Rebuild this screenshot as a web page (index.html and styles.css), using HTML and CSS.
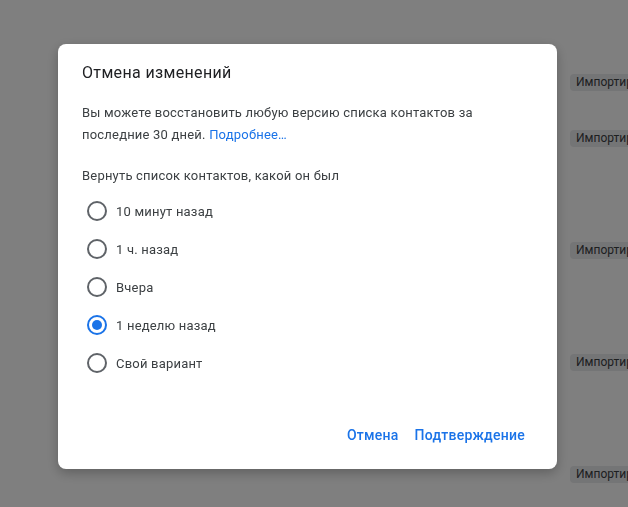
FILE: index.html
```html
<!DOCTYPE html>
<html lang="ru">
<head>
  <meta charset="UTF-8">
  <title>Отмена изменений</title>
  <link rel="stylesheet" href="styles.css">
</head>
<body>

  <!-- page behind the dialog -->
  <div class="page">
    <div class="row"><span class="chip">Импортированные</span></div>
    <div class="row"><span class="chip">Импортированные</span></div>
    <div class="row"></div>
    <div class="row"><span class="chip">Импортированные</span></div>
    <div class="row"></div>
    <div class="row"><span class="chip">Импортированные</span></div>
    <div class="row"></div>
    <div class="row"><span class="chip">Импортированные</span></div>
  </div>

  <div class="scrim"></div>

  <div class="dialog">
    <h2 class="dialog-title">Отмена изменений</h2>
    <p class="dialog-text">Вы можете восстановить любую версию списка контактов за последние 30 дней. <a href="#">Подробнее…</a></p>

    <p class="dialog-label">Вернуть список контактов, какой он был</p>
    <div class="options">
      <label class="option"><span class="radio"></span>10 минут назад</label>
      <label class="option"><span class="radio"></span>1 ч. назад</label>
      <label class="option"><span class="radio"></span>Вчера</label>
      <label class="option"><span class="radio checked"></span>1 неделю назад</label>
      <label class="option"><span class="radio"></span>Свой вариант</label>
    </div>

    <div class="actions">
      <button class="btn">Отмена</button>
      <button class="btn">Подтверждение</button>
    </div>
  </div>

</body>
</html>
```

FILE: styles.css
```css
* {
  box-sizing: border-box;
  margin: 0;
  padding: 0;
}

body {
  font-family: Roboto, 'Liberation Sans', sans-serif;
  background: #ffffff;
  color: #3c4043;
  height: 100vh;
  overflow: hidden;
}

.page {
  padding-top: 54px;
}

.row {
  height: 56px;
  display: flex;
  align-items: center;
  padding-left: 570px;
}

.chip {
  background: #e9eaec;
  color: #3c4043;
  font-size: 12px;
  line-height: 17px;
  padding: 0 6px;
  border-radius: 4px;
  white-space: nowrap;
}

.scrim {
  position: fixed;
  inset: 0;
  background: rgba(0, 0, 0, 0.5);
}

.dialog {
  position: fixed;
  left: 58px;
  top: 44px;
  width: 499px;
  height: 425px;
  background: #ffffff;
  border-radius: 8px;
  box-shadow: 0 4px 12px rgba(0, 0, 0, 0.25);
  padding: 17px 24px 20px;
  display: flex;
  flex-direction: column;
}

.dialog-title {
  font-weight: 400;
  font-size: 16px;
  line-height: 24px;
  color: #202124;
  letter-spacing: 0.35px;
}

.dialog-text {
  margin-top: 17px;
  font-size: 13px;
  line-height: 22px;
  color: #3c4043;
  letter-spacing: 0.2px;
  padding-right: 50px;
}

.dialog-text a {
  color: #1a73e8;
  text-decoration: none;
}

.dialog-label {
  margin-top: 19px;
  font-size: 13px;
  line-height: 22px;
  color: #3c4043;
  letter-spacing: 0.2px;
}

.options {
  margin-top: 5px;
  display: flex;
  flex-direction: column;
}

.option {
  height: 38px;
  display: flex;
  align-items: center;
  gap: 9px;
  font-size: 13px;
  color: #3c4043;
  letter-spacing: 0.2px;
  padding-left: 5px;
}

.radio {
  width: 20px;
  height: 20px;
  border: 2px solid #5f6368;
  border-radius: 50%;
  display: flex;
  align-items: center;
  justify-content: center;
}

.radio.checked {
  border-color: #1a73e8;
}

.radio.checked::after {
  content: '';
  width: 10px;
  height: 10px;
  border-radius: 50%;
  background: #1a73e8;
}

.actions {
  margin-top: auto;
  display: flex;
  justify-content: flex-end;
  gap: 16px;
  padding-right: 8px;
  margin-bottom: 6px;
}

.btn {
  border: none;
  background: none;
  font-family: inherit;
  font-size: 14px;
  font-weight: 500;
  color: #1a73e8;
  letter-spacing: 0.25px;
  cursor: pointer;
}
```
